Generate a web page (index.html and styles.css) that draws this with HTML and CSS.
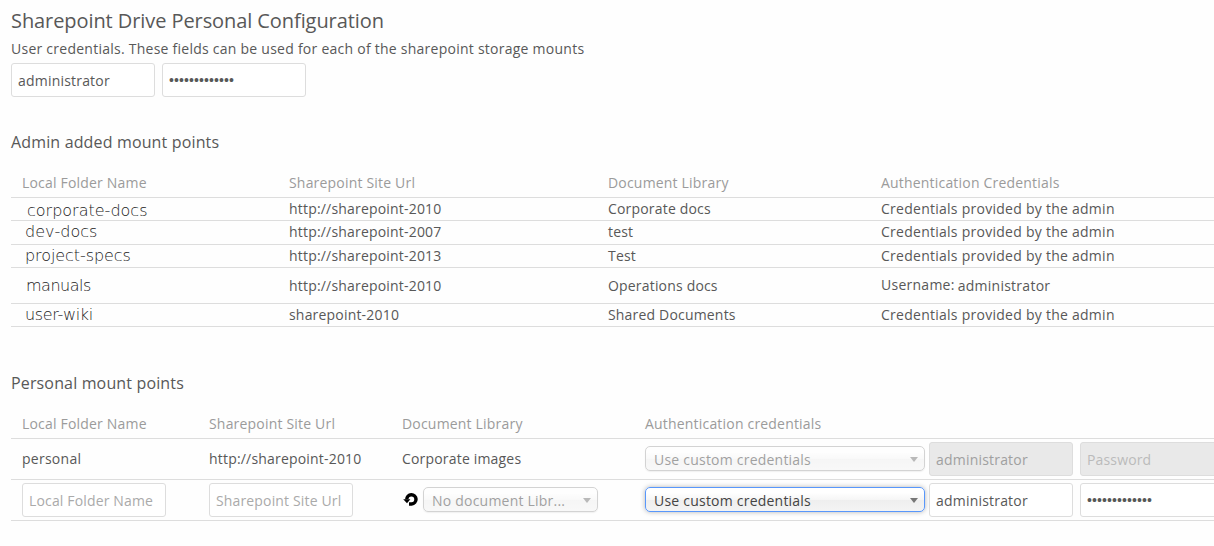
FILE: index.html
```html
<!DOCTYPE html>
<html lang="en">
<head>
<meta charset="utf-8">
<title>Sharepoint Drive Personal Configuration</title>
<link rel="stylesheet" href="styles.css">
</head>
<body>
<main class="page">
  <h1 class="title">Sharepoint Drive Personal Configuration</h1>
  <p class="intro">User credentials. These fields can be used for each of the sharepoint storage mounts</p>
  <div class="fields">
    <input class="field" type="text" value="administrator">
    <div class="field dots">•••••••••••••</div>
  </div>

  <h2 class="subtitle">Admin added mount points</h2>
  <section class="table admin">
    <div class="row head"><span>Local Folder Name</span><span>Sharepoint Site Url</span><span>Document Library</span><span>Authentication Credentials</span></div>
    <div class="row first"><span class="folder corporate">corporate-docs</span><span class="url">http://sharepoint-2010</span><span class="doc">Corporate docs</span><span>Credentials provided by the admin</span></div>
    <div class="row roomy raised"><span class="folder dev">dev-docs</span><span class="url">http://sharepoint-2007</span><span class="doc">test</span><span>Credentials provided by the admin</span></div>
    <div class="row"><span class="folder specs">project-specs</span><span class="url">http://sharepoint-2013</span><span class="doc">Test</span><span>Credentials provided by the admin</span></div>
    <div class="row tall"><span class="folder manuals">manuals</span><span class="url">http://sharepoint-2010</span><span class="doc">Operations docs</span><span class="user"><span class="user-label">Username:</span><span>administrator</span></span></div>
    <div class="row"><span class="folder wiki">user-wiki</span><span class="url">sharepoint-2010</span><span class="doc">Shared Documents</span><span>Credentials provided by the admin</span></div>
  </section>

  <h2 class="subtitle">Personal mount points</h2>
  <section class="table personal">
    <div class="row head"><span>Local Folder Name</span><span>Sharepoint Site Url</span><span>Document Library</span><span>Authentication credentials</span></div>
    <div class="row">
      <span>personal</span><span class="url">http://sharepoint-2010</span><span class="doc">Corporate images</span>
      <div class="credentials saved">
        <div class="select disabled"><span>Use custom credentials</span><i class="arrow"></i></div>
        <input class="field" type="text" value="administrator" disabled>
        <input class="field" type="password" placeholder="Password" disabled>
      </div>
    </div>
    <div class="row">
      <input class="field" type="text" placeholder="Local Folder Name">
      <input class="field" type="text" placeholder="Sharepoint Site Url">
      <div class="library">
        <svg class="reload" width="16" height="16" viewBox="0 0 16 16"><path d="M3.8 7.4A4.6 4.6 0 1 1 8.6 11.9H6" fill="none" stroke="#000" stroke-width="3.5"/><path d="M.2 7.2H7.4L4 11.2Z"/></svg>
        <div class="select disabled"><span>No document Libr...</span><i class="arrow"></i></div>
      </div>
      <div class="credentials">
        <div class="select active"><span>Use custom credentials</span><i class="arrow"></i></div>
        <input class="field" type="text" value="administrator">
        <div class="field dots">•••••••••••••</div>
      </div>
    </div>
  </section>
</main>
</body>
</html>
```
FILE: styles.css
```css
* { box-sizing: border-box; }
body {
  margin: 0;
  overflow: hidden;
  background: #fefefe;
  color: #585858;
  font: 14px/20px "Open Sans", sans-serif;
  letter-spacing: .26px;
}
.page { padding: 7px 0 0 11px; }
.title { margin: 0; font-size: 20px; font-weight: 400; line-height: 28px; letter-spacing: -.08px; }
.intro { margin: 4px 0; letter-spacing: .25px; }
.fields { display: flex; gap: 7px; }
.field {
  flex: none;
  width: 144px;
  height: 34px;
  margin: 0;
  padding: 1px 6px 0;
  border: 1px solid #ddd;
  border-radius: 3px;
  background: #fff;
  color: #585858;
  font: 14px/31px "Open Sans", sans-serif;
  letter-spacing: .2px;
}
.field::placeholder { color: #aaa; opacity: 1; }
.field:disabled { background: #e9e9e9; color: #a0a0a0; }
.field:disabled::placeholder { color: #bbb; }
.dots { font-family: "Liberation Sans", sans-serif; letter-spacing: .1px; }
.subtitle { margin: 33px 0 14px; font-size: 16px; font-weight: 400; line-height: 24px; letter-spacing: .15px; }
.row {
  display: grid;
  align-items: center;
  height: 23px;
  padding-left: 11px;
  border-bottom: 1px solid #ddd;
  white-space: nowrap;
}
.row.head { height: 30px; color: #9b9b9b; letter-spacing: .19px; }
.roomy { height: 24px; }
.raised { padding-bottom: 2px; }
.first { align-items: start; padding-top: 1px; }
.tall { height: 36px; }
.url { letter-spacing: .19px; }
.doc { letter-spacing: .18px; }
.admin .row { grid-template-columns: 267px 319px 273px 1fr; }
.admin + .subtitle { margin-top: 44px; }
.personal .row { grid-template-columns: 187px 193px 243px 1fr; height: 41px; }
.personal .row.head { height: 30px; }
.personal .field::placeholder { letter-spacing: .15px; }
.folder {
  padding-left: 3px;
  color: #222;
  font-family: "DejaVu Sans", sans-serif;
  font-size: 16px;
  font-weight: 200;
  letter-spacing: 0;
}
.corporate { padding: 2px 0 0 5px; }
.specs { letter-spacing: -.08px; }
.manuals { padding-left: 4px; letter-spacing: -.5px; }
.wiki { letter-spacing: -.35px; }
.user { display: flex; gap: 3px; }
.user-label { margin-top: -1px; }
.credentials { display: flex; align-items: center; }
.credentials .select { width: 280px; margin-right: 4px; }
.credentials .field + .field { margin-left: 7px; }
.saved .select { margin-bottom: 1px; }
.library { display: flex; align-items: center; gap: 4px; padding-left: 1px; }
.library .select, .credentials .active { margin-bottom: 1px; }
.library .select { width: 175px; }
.reload { flex: none; }
.select {
  display: flex;
  align-items: center;
  justify-content: space-between;
  height: 25px;
  padding: 3px 6px 0 8px;
  border: 1px solid #aaa;
  border-radius: 5px;
  background: linear-gradient(#fff 20%, #f6f6f6 50%, #eee 52%, #f4f4f4);
  color: #444;
  letter-spacing: .22px;
}
.select.disabled { opacity: .5; box-shadow: 0 1px 1px rgba(0, 0, 0, .1); }
.select.active { border-color: #5897fb; box-shadow: 0 0 5px rgba(0, 0, 0, .3); }
.arrow { margin-top: -2px; border: 4px solid transparent; border-top: 5px solid #777; border-bottom: 0; }
```
